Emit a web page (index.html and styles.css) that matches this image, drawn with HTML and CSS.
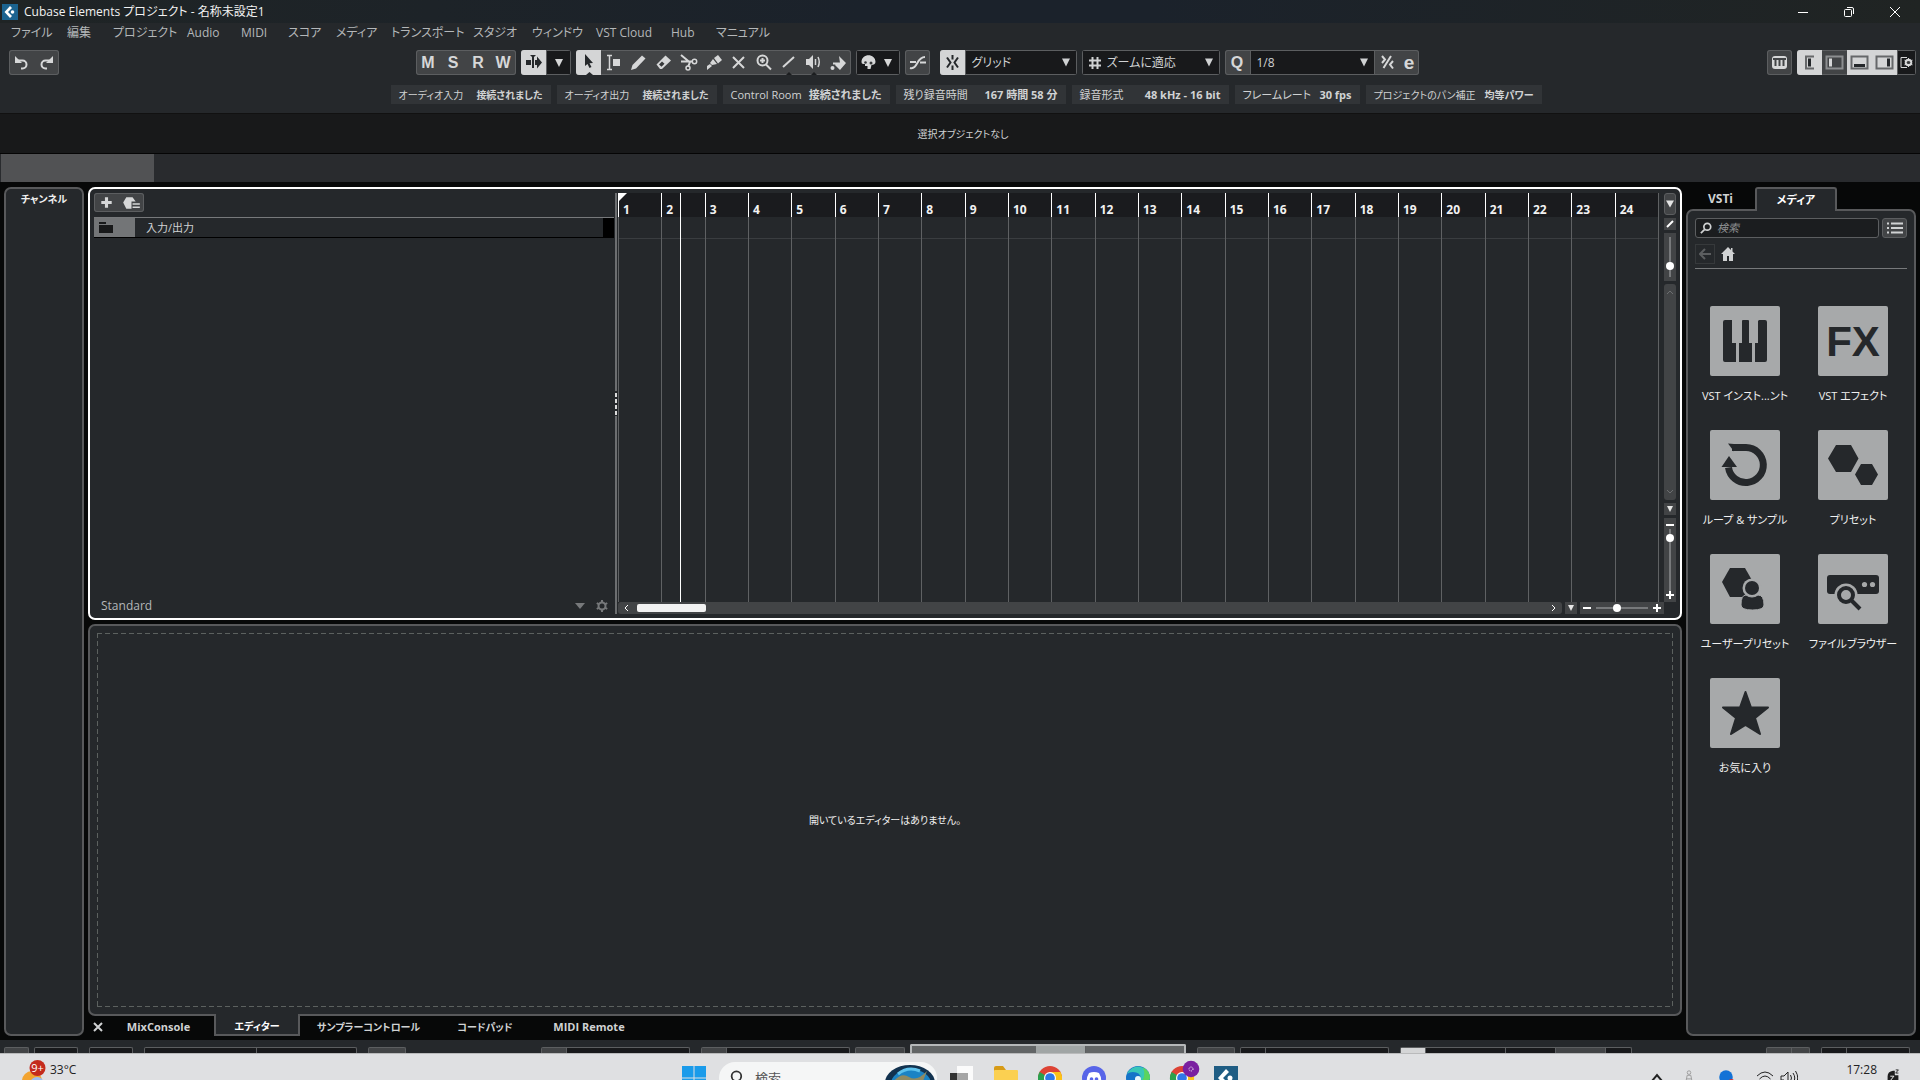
FILE: index.html
```html
<!DOCTYPE html>
<html lang="ja">
<head>
	<meta charset="UTF-8">
	<title>Cubase Elements プロジェクト - 名称未設定1</title>
	<link rel="stylesheet" href="styles.css">
</head>
<body>
	<header class="titlebar">
		<svg class="app-logo" viewBox="0 0 16 16"><rect width="16" height="16" fill="#1b6390"/><path d="M8 2 2.5 8 8 14l2-2-4-4 4-4z" fill="#fff"/><circle cx="10.500" cy="8" r="1.800" fill="#fff"/></svg>
		<h1>Cubase Elements プロジェクト - 名称未設定1</h1>
		<div class="win-buttons">
			<button aria-label="最小化"><svg viewBox="0 0 12 12"><path d="M1 6.500h10"/></svg></button>
			<button aria-label="元に戻す"><svg viewBox="0 0 12 12"><rect x="1.500" y="3.500" width="7" height="7" rx="1"/><path d="M4 1.500h5a1.500 1.500 0 0 1 1.500 1.500v5"/></svg></button>
			<button aria-label="閉じる"><svg viewBox="0 0 12 12"><path d="M1 1l10 10M11 1 1 11"/></svg></button>
		</div>
	</header>

	<nav class="menu">
		<a href="#">ファイル</a>
		<a href="#">編集</a>
		<a href="#">プロジェクト</a>
		<a href="#">Audio</a>
		<a href="#">MIDI</a>
		<a href="#">スコア</a>
		<a href="#">メディア</a>
		<a href="#">トランスポート</a>
		<a href="#">スタジオ</a>
		<a href="#">ウィンドウ</a>
		<a href="#">VST Cloud</a>
		<a href="#">Hub</a>
		<a href="#">マニュアル</a>
	</nav>

	<div class="toolbar">
		<div class="group">
			<button class="tool" aria-label="元に戻す"><svg viewBox="0 0 25 25"><path d="M8.500 10.500h5a4 4 0 0 1 0 8H12" class="line"/><path d="M6 6v7h7z"/></svg></button>
			<button class="tool" aria-label="やり直し"><svg viewBox="0 0 25 25"><path d="M16.500 10.500h-5a4 4 0 0 0 0 8H13" class="line"/><path d="M19 6v7h-7z"/></svg></button>
		</div>

		<div class="toolbar-main">
			<div class="group letters">
				<button class="tool">M</button>
				<button class="tool">S</button>
				<button class="tool">R</button>
				<button class="tool">W</button>
			</div>
			<div class="group">
				<button class="tool on" aria-label="オートスクロール"><svg viewBox="0 0 25 25"><path d="M5 10h5v5H5zM14 10h2V6.500l5 6-5 6V15h-2z"/><path d="M9 5h6l-2 2v11h-2V7z"/></svg></button>
				<button class="tool dark" aria-label="オートスクロール設定"><svg viewBox="0 0 25 25"><path d="M9 9h8l-4 8z"/></svg></button>
			</div>
			<div class="group">
				<button class="tool on" aria-label="選択"><svg viewBox="0 0 25 25"><path d="M9 4v12l2.500-2 2 4 2-1-2-3.700L17 13z"/><path d="M10 25l3.500-3 3.500 3z"/></svg></button>
				<button class="tool" aria-label="範囲選択"><svg viewBox="0 0 25 25"><path d="M6 5.500h5M8.500 6v13M6 19.500h5" class="line mid"/><path d="M12 9h7v7h-7z"/></svg></button>
				<button class="tool" aria-label="鉛筆"><svg viewBox="0 0 25 25"><path d="M5 20l1.500-5L16 5.500l3.500 3L10 18.500z"/></svg></button>
				<button class="tool" aria-label="消しゴム"><svg viewBox="0 0 25 25"><path d="M5.500 14.500 14.500 5.500l5.500 5-9 8.500H9z"/><path d="M8 14.500l2.500 2.200 3-3L11 11.500z" class="hole"/></svg></button>
				<button class="tool" aria-label="はさみ"><svg viewBox="0 0 25 25"><path d="M5 5l9 7.500M5 11.500l11 0M14 12l-2 5" class="line"/><circle cx="18.500" cy="11.500" r="2.200" class="line mid"/><circle cx="12" cy="18" r="2" class="line mid"/></svg></button>
				<button class="tool" aria-label="のり"><svg viewBox="0 0 25 25"><path d="M13 8l4-3 4 5-4 3.500z"/><path d="M12 9l4 5-5 1-2-2zM9 14l2 2-5 4v-4z"/></svg></button>
				<button class="tool" aria-label="ミュート"><svg viewBox="0 0 25 25"><path d="M7 7l11 11M18 7 7 18" class="line"/></svg></button>
				<button class="tool" aria-label="ズーム"><svg viewBox="0 0 25 25"><circle cx="11.500" cy="10.500" r="5" class="line"/><path d="M15 14.500l5 5M9 10.500h5M11.500 8v5" class="line"/></svg></button>
				<button class="tool" aria-label="ライン"><svg viewBox="0 0 25 25"><path d="M7 17 18 7" class="line"/><path d="M10 25l3-3 3 3z" class="notch"/></svg></button>
				<button class="tool" aria-label="再生"><svg viewBox="0 0 25 25"><path d="M5 9h3l4-4v14l-4-4H5z"/><path d="M14.500 9v6M17 7q2.500 5 0 10" class="line mid"/><path d="M10 25l3-3 3 3z" class="notch"/></svg></button>
				<button class="tool" aria-label="カラー"><svg viewBox="0 0 25 25"><path d="M13 6l7 7-6 7-5-5 1-2h4z"/><path d="M7 13.500h8" class="line"/><circle cx="6.500" cy="18" r="2"/></svg></button>
			</div>
			<div class="group color-menu">
				<button class="tool dark" aria-label="カラーメニュー"><svg viewBox="0 0 44 25"><path d="M5.500 12c0-9 14-9 14 0 0 2-2 3-4 3l-1 4h-3v-3H9v-2c-2 0-3.500 0-3.500-2z"/><circle cx="9.500" cy="12.500" r="1.300" class="hole"/><circle cx="15" cy="13" r="1.500" class="hole"/><path d="M28 9h8l-4 8z"/></svg></button>
			</div>
			<div class="group">
				<button class="tool" aria-label="ゼロクロス"><svg viewBox="0 0 25 25"><path d="M5 18c8 2 6-11 15-11M5 12h6M15 12.500h6" class="line"/></svg></button>
			</div>
			<div class="group snap">
				<button class="tool on" aria-label="スナップ"><svg viewBox="0 0 25 25"><path d="M12.500 5v4.500M12.500 15.500V20M7 7.500l3.500 5-3.500 5M18 7.500l-3.500 5 3.500 5" class="line"/></svg></button>
				<label class="picker"><select aria-label="スナップタイプ"><option>グリッド</option></select><svg viewBox="0 0 8 8"><path d="M0 0h8L4 8z"/></svg></label>
			</div>
			<div class="group grid-type">
				<label class="picker"><svg class="hash" viewBox="0 0 12 12"><path d="M3.500 0v12M8.500 0v12M0 3.500h12M0 8.500h12"/></svg><select aria-label="グリッドタイプ"><option>ズームに適応</option></select><svg viewBox="0 0 8 8"><path d="M0 0h8L4 8z"/></svg></label>
			</div>
			<div class="group quantize">
				<button class="tool letter-q">Q</button>
				<label class="picker"><select aria-label="クオンタイズ"><option>1/8</option></select><svg viewBox="0 0 8 8"><path d="M0 0h8L4 8z"/></svg></label>
				<button class="tool" aria-label="ソフトクオンタイズ"><svg viewBox="0 0 25 25"><path d="M7 6l3 3.500L7 13M8.500 18 16 6M18 11l-3 3.500 3 4" class="line"/></svg></button>
				<button class="tool letter-e">e</button>
			</div>
		</div>

		<div class="toolbar-right">
			<div class="group">
				<button class="tool" aria-label="オンスクリーンキーボード"><svg viewBox="0 0 25 25"><rect x="5" y="6" width="15" height="13" rx="3"/><path d="M8.500 10v6M12.500 10v6M16.500 10v6M6 9h13" class="cut"/></svg></button>
			</div>
			<div class="group zones">
				<button class="tool on" aria-label="インスペクター"><svg viewBox="0 0 25 25"><path d="M17 6.500H9v12h8" class="frame"/><path d="M11 8.500h3v8h-3z"/></svg></button>
				<button class="tool" aria-label="左ゾーン"><svg viewBox="0 0 25 25"><rect x="4.500" y="6.500" width="16" height="12" class="frame"/><path d="M7 8.500h3v8H7z"/></svg></button>
				<button class="tool on" aria-label="下ゾーン"><svg viewBox="0 0 25 25"><rect x="4.500" y="6.500" width="16" height="12" class="frame"/><path d="M7 14h11v3H7z"/></svg></button>
				<button class="tool on" aria-label="右ゾーン"><svg viewBox="0 0 25 25"><rect x="4.500" y="6.500" width="16" height="12" class="frame"/><path d="M15 8.500h3v8h-3z"/></svg></button>
				<button class="tool dark" aria-label="レイアウト設定"><svg viewBox="0 0 19 25"><path d="M10 7.500H4v10h6" class="line thin"/><circle cx="11.500" cy="12.500" r="2.800" class="line"/><path d="M11.500 8v9M7.500 10.200l8 4.600M15.500 10.200l-8 4.600" class="line thin"/><circle cx="11.500" cy="12.500" r="1.500" class="hole"/></svg></button>
			</div>
		</div>
	</div>

	<dl class="status">
		<div class="w160 tight"><dt>オーディオ入力</dt><dd>接続されました</dd></div>
		<div class="w160 tight"><dt>オーディオ出力</dt><dd>接続されました</dd></div>
		<div class="w167"><dt>Control Room</dt><dd>接続されました</dd></div>
		<div class="w170"><dt>残り録音時間</dt><dd>167 時間 58 分</dd></div>
		<div class="w157"><dt>録音形式</dt><dd>48 kHz - 16 bit</dd></div>
		<div class="w125"><dt>フレームレート</dt><dd>30 fps</dd></div>
		<div class="w176 tight"><dt>プロジェクトのパン補正</dt><dd>均等パワー</dd></div>
	</dl>

	<div class="info-line">選択オブジェクトなし</div>
	<div class="overview"><div class="overview-range"></div></div>

	<main class="workspace">
		<aside class="channel">チャンネル</aside>

		<div class="center">
			<section class="project">
				<div class="tracks">
					<div class="group add-track">
						<button class="tool" aria-label="トラックを追加"><svg viewBox="0 0 24 18"><path d="M12 4v10M7 9h10" class="line plus"/></svg></button>
						<button class="tool" aria-label="トラックプリセット"><svg viewBox="0 0 24 18"><path d="M7 4h6l3 4h-4v7H7L4 9z"/><path d="M13 10.500h7M13 13.500h7" class="line mid"/></svg></button>
					</div>
					<div class="track">
						<div class="track-icon"><svg viewBox="0 0 14 12"><path d="M0 1h7v2h7v9H0z"/><path d="M0 3.500h14" stroke="#77797b"/></svg></div>
						<span>入力/出力</span>
						<div class="track-meter"></div>
					</div>
					<div class="track-foot">
						<span>Standard</span>
						<button aria-label="ビュー"><svg viewBox="0 0 10 6"><path d="M0 0h10L5 6z"/></svg></button>
						<button aria-label="設定"><svg viewBox="0 0 14 14"><circle cx="7" cy="7" r="3.500" class="ring"/><path d="M7 1v2.500M7 10.500V13M1.800 4l2.200 1.300M10 8.700l2.200 1.300M1.800 10 4 8.700M10 5.300 12.200 4" class="ring"/></svg></button>
					</div>
				</div>
				<div class="splitter"><i></i><i></i><i></i><i></i></div>
				<div class="timeline">
					<div class="bars">
						<ol>
							<li><span>1</span></li>
							<li><span>2</span></li>
							<li><span>3</span></li>
							<li><span>4</span></li>
							<li><span>5</span></li>
							<li><span>6</span></li>
							<li><span>7</span></li>
							<li><span>8</span></li>
							<li><span>9</span></li>
							<li><span>10</span></li>
							<li><span>11</span></li>
							<li><span>12</span></li>
							<li><span>13</span></li>
							<li><span>14</span></li>
							<li><span>15</span></li>
							<li><span>16</span></li>
							<li><span>17</span></li>
							<li><span>18</span></li>
							<li><span>19</span></li>
							<li><span>20</span></li>
							<li><span>21</span></li>
							<li><span>22</span></li>
							<li><span>23</span></li>
							<li><span>24</span></li>
						</ol>
						<div class="locator"></div>
						<div class="playhead"></div>
					</div>
					<div class="side-bar">
						<button class="ruler-menu" aria-label="ルーラー"><svg viewBox="0 0 8 7"><path d="M0 0h8L4 7z"/></svg></button>
						<button class="small" aria-label="編集"><svg viewBox="0 0 8 8"><path d="M1 7l6-6" stroke-width="2"/></svg></button>
						<div class="vslider wave"><input type="range" value="22" aria-label="波形ズーム"></div>
						<div class="vscroll">
							<svg viewBox="0 0 8 4"><path d="M1 4l3-3 3 3"/></svg>
							<svg viewBox="0 0 8 4"><path d="M1 0l3 3 3-3"/></svg>
						</div>
						<button class="small" aria-label="縦ズーム設定"><svg viewBox="0 0 8 8"><path d="M1 1h6L4 7z" class="solid"/></svg></button>
						<div class="vslider zoom">
							<button aria-label="縮小"><svg viewBox="0 0 8 8"><path d="M0 4h8" stroke-width="2"/></svg></button>
							<input type="range" value="92" aria-label="縦ズーム">
							<button aria-label="拡大"><svg viewBox="0 0 8 8"><path d="M0 4h8M4 0v8" stroke-width="2"/></svg></button>
						</div>
					</div>
					<div class="foot-bar">
						<div class="hscroll">
							<svg viewBox="0 0 4 8"><path d="M4 1 1 4l3 3"/></svg>
							<div class="thumb"></div>
							<svg viewBox="0 0 4 8"><path d="M0 1l3 3-3 3"/></svg>
						</div>
						<button class="small" aria-label="横ズーム設定"><svg viewBox="0 0 8 8"><path d="M1 1h6L4 7z" class="solid"/></svg></button>
						<div class="hzoom">
							<button aria-label="縮小"><svg viewBox="0 0 8 8"><path d="M0 4h8" stroke-width="2"/></svg></button>
							<input type="range" value="38" aria-label="横ズーム">
							<button aria-label="拡大"><svg viewBox="0 0 8 8"><path d="M0 4h8M4 0v8" stroke-width="2"/></svg></button>
						</div>
					</div>
				</div>
			</section>

			<section class="lower">
				<p>開いているエディターはありません。</p>
			</section>
			<nav class="lower-tabs">
				<button class="close" aria-label="閉じる"><svg viewBox="0 0 10 10"><path d="M1 1l8 8M9 1 1 9"/></svg></button>
				<button class="t1">MixConsole</button>
				<button class="t2 active">エディター</button>
				<button class="t3">サンプラーコントロール</button>
				<button class="t4">コードパッド</button>
				<button class="t5">MIDI Remote</button>
			</nav>
		</div>

		<aside class="right">
			<nav class="right-tabs">
				<button>VSTi</button>
				<button class="active">メディア</button>
			</nav>
			<div class="media">
				<div class="media-search">
					<label class="search-box"><svg viewBox="0 0 14 14"><circle cx="8.500" cy="5.500" r="4"/><path d="M5.500 8.500 1 13"/></svg><input type="text" placeholder="検索" aria-label="検索"></label>
					<button class="list-btn" aria-label="リスト"><svg viewBox="0 0 16 12"><path d="M0 1.500h2M4 1.500h12M0 6h2M4 6h12M0 10.500h2M4 10.500h12"/></svg></button>
				</div>
				<div class="media-path">
					<button class="back" aria-label="戻る"><svg viewBox="0 0 12 12"><path d="M12 6H2M6 1 1 6l5 5"/></svg></button>
					<button class="home" aria-label="ホーム"><svg viewBox="0 0 14 14"><path d="M7 0 0 7h2v7h4V9h2v5h4V7h2l-2.500-2.500V1H10v2z"/></svg></button>
				</div>
				<ul class="tiles">
					<li><a href="#"><svg viewBox="0 0 70 70"><path d="M15 14h7v23h4v19H15q-2 0-2-2V16q0-2 2-2zM33 14h5q1 0 1 1v22h3v19H29V37h3V15q0-1 1-1zM49 14h6q2 0 2 2v38q0 2-2 2H45V37h3V15z"/></svg>VST インスト...ント</a></li>
					<li><a href="#"><svg viewBox="0 0 70 70"><text x="35" y="50" text-anchor="middle" class="fx">FX</text></svg>VST エフェクト</a></li>
					<li><a href="#"><svg viewBox="0 0 70 70"><path d="M22 17.500h14a17.500 17.500 0 1 1-17.500 20" class="loop"/><path d="M11.500 37 19 26l8 11z"/><path d="M18 13.500l6 8V14z"/></svg>ループ &amp; サンプル</a></li>
					<li><a href="#"><svg viewBox="0 0 70 70"><path d="M18 15h15l7.500 13.500L33 42H18l-8-13.500zM43 34h11l6 10.500L54 55H43l-6-10.500z"/></svg>プリセット</a></li>
					<li><a href="#"><svg viewBox="0 0 70 70"><path d="M20 14h15l8 14-8 15H20l-8-15z"/><circle cx="42" cy="34" r="9.500" class="bg"/><circle cx="42" cy="34" r="7"/><path d="M31 51q0-10 5-10 6 4 12 0 6 0 6 10 0 5-11.500 5T31 51z" class="person"/></svg>ユーザープリセット</a></li>
					<li><a href="#"><svg viewBox="0 0 70 70"><rect x="9" y="21" width="52" height="19" rx="3"/><circle cx="46.500" cy="30.500" r="2.600" class="bg"/><circle cx="54.500" cy="30.500" r="2.600" class="bg"/><circle cx="28" cy="41" r="11.500" class="bg"/><circle cx="28" cy="41" r="7" class="lens"/><path d="M33 46l9 9" class="lens"/></svg>ファイルブラウザー</a></li>
					<li><a href="#"><svg viewBox="0 0 70 70"><path d="M35.500 14l5.500 15.500h17L45 40l5 16-14.500-9L21 56l5-16-13-10.500h17z" class="star"/></svg>お気に入り</a></li>
				</ul>
			</div>
		</aside>
	</main>

	<!-- トランスポートバー (タスクバーの下に隠れる) -->
	<div class="transport">
		<div class="tp">
			<div class="pair"><i class="grey w25"></i><i class="w44"></i></div>
			<i class="w44"></i>
			<i class="w213"><b class="w112"></b></i>
			<i class="grey w38"></i>
		</div>
		<div class="tp">
			<i class="w149"><b class="fill w25"></b></i>
			<div class="pair"><i class="w149"><b class="fill w25"></b></i><i class="grey w50"></i><i class="display"><b></b></i></div>
			<div class="pair"><i class="grey w38"></i><i class="w149"><b class="w25"></b></i></div>
			<i class="w232"><b class="light w25"></b><b class="w80"></b><b class="w50"></b><b class="fill w50"></b></i>
		</div>
		<div class="tp">
			<i class="grey w44"><b class="w25"></b></i>
			<i class="w89"><b class="w25"></b></i>
		</div>
	</div>

	<footer class="taskbar">
		<div class="taskbar-row">
			<button class="weather">
				<svg viewBox="0 0 28 34"><circle cx="12" cy="23" r="10" fill="#f2a431"/><circle cx="17" cy="26" r="7" fill="#9dbdf0"/><circle cx="17.500" cy="10" r="8" fill="#c42b1c"/><text x="17.500" y="14" text-anchor="middle">9+</text></svg>
				<span>33°C</span>
			</button>
			<div class="apps">
				<button aria-label="スタート"><svg viewBox="0 0 24 24"><path d="M0 0h11.500v11.500H0zM12.500 0H24v11.500H12.500zM0 12.500h11.500V24H0zM12.500 12.500H24V24H12.500z" fill="#1a9bea"/></svg></button>
				<label class="task-search"><svg viewBox="0 0 16 18"><circle cx="8.500" cy="7" r="5.500"/><path d="M5 12l-4 5"/></svg><input type="text" placeholder="検索" aria-label="Windows 検索"><svg class="art" viewBox="0 0 50 32"><ellipse cx="25" cy="21" rx="25" ry="18" fill="#12324f"/><ellipse cx="26" cy="22" rx="20" ry="15" fill="#1b83c4"/><path d="M8 20q8-10 16-5t18-6l-4 10-30 8z" fill="#8f8a62"/><path d="M13 12q10-8 22-3" stroke="#5cc1ec" stroke-width="3" fill="none"/></svg></label>
				<button aria-label="タスクビュー"><svg viewBox="0 0 24 24"><path d="M7 0h16v17H7z" fill="#fbfbfb"/><path d="M0 7h7v17H0z" fill="#333"/><path d="M7 7h11v17H7z" fill="#a5a5a5"/></svg></button>
				<button aria-label="エクスプローラー"><svg viewBox="0 0 24 24"><path d="M0 2q0-2 2-2h7l3 4v4H0z" fill="#d79b16"/><rect y="4" width="24" height="20" rx="1" fill="#fbd051"/></svg></button>
				<button aria-label="Chrome"><svg viewBox="0 0 24 24"><circle cx="12" cy="12" r="12" fill="#dd4335"/><path d="M12 12 1.600 6A12 12 0 0 0 12 24z" fill="#2aa14e"/><path d="M12 6h10.400A12 12 0 0 1 12 24l5-9z" fill="#fbc118"/><circle cx="12" cy="12" r="6" fill="#fff"/><circle cx="12" cy="12" r="4.800" fill="#2f78e8"/></svg></button>
				<button aria-label="Discord"><svg viewBox="0 0 24 24"><circle cx="12" cy="12" r="12" fill="#5865e8"/><path d="M7 7q5-2 10 0 3 5 2 10l-4 2-1-2h-4l-1 2-4-2q-1-5 2-10z" fill="#fff"/><circle cx="9.500" cy="13" r="1.800" fill="#5865e8"/><circle cx="14.500" cy="13" r="1.800" fill="#5865e8"/></svg></button>
				<button aria-label="Edge"><svg viewBox="0 0 24 24"><circle cx="12" cy="12" r="12" fill="#1573c8"/><path d="M1 8A12 12 0 0 1 24 11q0 5-6 5-5 0-3-4-1-6-8-6-4 0-6 2z" fill="#38c6b8"/><path d="M17 1.500A12 12 0 0 1 24 12q-1 4-5 4l-3-1q4-6 1-13.500z" fill="#5bd45d"/><circle cx="12" cy="13" r="3" fill="#e9f5fa"/></svg></button>
				<button aria-label="Chrome プロフィール"><svg viewBox="0 0 24 24" class="badged"><circle cx="12" cy="12" r="12" fill="#dd4335"/><path d="M12 12 1.600 6A12 12 0 0 0 12 24z" fill="#2aa14e"/><path d="M12 6h10.400A12 12 0 0 1 12 24l5-9z" fill="#fbc118"/><circle cx="12" cy="12" r="6" fill="#fff"/><circle cx="12" cy="12" r="4.800" fill="#2f78e8"/><circle cx="21" cy="3" r="8.300" fill="#7a1fa0"/><circle cx="21" cy="3" r="2" fill="none" stroke="#fff" stroke-dasharray="1 1"/></svg></button>
				<button aria-label="Cubase"><svg viewBox="0 0 24 24"><rect width="24" height="24" fill="#1f5d84"/><path d="M12 3 4 12l8 9 3-3-6-6 6-6z" fill="#fff"/><circle cx="16" cy="12" r="2.500" fill="#fff"/></svg></button>
			</div>
			<div class="tray">
				<button class="tray-up" aria-label="隠れているインジケーター"><svg viewBox="0 0 12 12"><path d="M1 9l5-6 5 6"/></svg></button>
				<svg class="pin" viewBox="0 0 10 20"><circle cx="5" cy="4" r="2"/><path d="M3 7h4l2 10H1zM2 11h6"/></svg>
				<svg class="net" viewBox="0 0 16 20"><circle cx="8" cy="9" r="7.500" fill="#1372d6"/><circle cx="14" cy="14" r="3" fill="#d92f2f"/></svg>
				<svg class="wifi" viewBox="0 0 18 18"><path d="M1 7q8-8 16 0M3.500 10q5.500-6 11 0M6 13q3-3 6 0"/></svg>
				<svg class="sound" viewBox="0 0 18 18"><path d="M1 7h3l4-4v12l-4-4H1zM10.500 6q2 3 0 6M13 4q3.500 5 0 10M15.500 2q4.500 7 0 14"/></svg>
				<time>17:28</time>
				<svg class="bell" viewBox="0 0 14 20"><path d="M1 8q0-5 6-6h2v5h4v9H1z" fill="#1e1e1e"/><path d="M4 8h4l-4 5h4" class="z"/><path d="M10 1h3l-3 3.500h3" class="zz"/></svg>
			</div>
		</div>
	</footer>
</body>
</html>
```

FILE: styles.css
```css
* {
    box-sizing: border-box;
}

body {
    margin: 0;
    height: 100vh;
    display: flex;
    flex-direction: column;
    overflow: hidden;
    background: #25282b;
    color: #d0d2d3;
    font: 12px/16px "Open Sans", "Noto Sans CJK JP", sans-serif;
    font-feature-settings: "palt";
}

ul,
ol,
dl,
dd,
p,
h1 {
    margin: 0;
    padding: 0;
}

li {
    list-style: none;
}

a {
    color: inherit;
    text-decoration: none;
}

button,
input,
select {
    margin: 0;
    padding: 0;
    border: 0;
    background: none;
    color: inherit;
    font: inherit;
    font-feature-settings: inherit;
    outline: none;
}

svg {
    display: block;
    fill: currentColor;
}

/* title + menu */
.titlebar {
    display: flex;
    align-items: center;
    height: 23px;
    padding: 0 2px;
    background: linear-gradient(90deg, #1f2425, #1b222b 45%, #1b222b 60%, #202423);
}

.app-logo {
    width: 16px;
    height: 16px;
    margin-right: 6px;
}

.titlebar h1 {
    color: #f2f2f2;
    font-size: 12px;
    font-weight: normal;
}

.win-buttons {
    display: flex;
    margin-left: auto;
}

.win-buttons button {
    display: flex;
    justify-content: center;
    width: 46px;
}

.win-buttons svg {
    width: 12px;
    height: 12px;
    fill: none;
    stroke: #fff;
}

.menu {
    display: grid;
    grid-template-columns: 56px 46px 74px 54px 47px 48px 55px 82px 59px 64px 75px 45px auto;
    justify-content: start;
    align-items: center;
    height: 20px;
    padding-left: 11px;
    color: #b4b7b9;
    white-space: nowrap;
}

/* toolbar */
.toolbar {
    display: flex;
    justify-content: space-between;
    padding: 7px 4px 0 9px;
}

.toolbar-main,
.toolbar-right {
    display: flex;
    gap: 5px;
}

.toolbar-main {
    margin-left: 8px;
}

.group {
    display: flex;
    height: 25px;
    overflow: hidden;
    background: #424446;
    border-radius: 3px;
    box-shadow: inset 0 0 0 1px #5c5e60;
}

.tool {
    width: 25px;
    height: 25px;
    flex: none;
    color: #d6d7d8;
}

.tool svg {
    width: 100%;
    height: 100%;
}

.tool.on {
    background: #d4d5d6;
    color: #25282b;
}

.dark,
.picker {
    background: #18191b;
    box-shadow: inset 0 0 0 1px #5c5e60;
}

.tool .line {
    fill: none;
    stroke: currentColor;
    stroke-width: 2;
}

.tool .line.thin {
    stroke-width: 1;
}

.tool .line.mid {
    stroke-width: 1.5;
}

.tool .plus {
    stroke-width: 3;
}

.tool .hole {
    fill: #36383a;
}

.tool .notch {
    fill: #1b1d1f;
}

.tool .cut {
    fill: none;
    stroke: #424446;
    stroke-width: 2;
}

.tool .frame {
    fill: none;
    stroke: #8c8e90;
    stroke-width: 2;
}

.on .frame {
    stroke: #66686a;
}

.letters .tool,
.letter-q,
.letter-e {
    font: bold 16px/24px "Liberation Sans", sans-serif;
}

.letter-e {
    font-size: 19px;
}

.letter-e,
.zones .dark {
    width: 19px;
}

.color-menu .tool {
    width: 44px;
}

.snap {
    width: 137px;
    margin-left: 5px;
}

.grid-type {
    width: 138px;
}

.quantize {
    width: 194px;
}

.picker {
    display: flex;
    align-items: center;
    flex: 1;
    padding: 0 7px;
}

.picker select {
    flex: 1;
    min-width: 0;
    appearance: none;
}

.picker svg {
    width: 8px;
    height: 9px;
}

.picker .hash {
    width: 12px;
    height: 12px;
    margin-right: 6px;
    stroke: currentColor;
    stroke-width: 2;
}

/* status */
.status {
    display: flex;
    justify-content: center;
    gap: 6px;
    padding: 10px 0 9px 12px;
}

.status div {
    display: flex;
    justify-content: space-between;
    align-items: center;
    height: 19px;
    padding: 0 8px;
    background: #313437;
    font-size: 11px;
    white-space: nowrap;
}

.status .tight {
    font-size: 10px;
}

.status dd {
    font-weight: bold;
}

.w160 {
    width: 160px;
}

.w167 {
    width: 167px;
}

.w170 {
    width: 170px;
}

.w157 {
    width: 157px;
}

.w125 {
    width: 125px;
}

.w176 {
    width: 176px;
}

.info-line {
    display: flex;
    align-items: center;
    justify-content: center;
    height: 41px;
    padding-left: 6px;
    background: #18191a;
    border-top: 1px solid #111;
    border-bottom: 1px solid #050505;
    font-size: 10px;
}

.overview {
    height: 28px;
    padding: 0 1px;
    background: #292b2e;
}

.overview-range {
    width: 8%;
    height: 28px;
    background: #515254;
}

/* workspace */
.workspace {
    display: flex;
    flex: 1;
    gap: 4px;
    min-height: 0;
    padding: 5px 4px 4px;
    background: #070808;
}

.channel,
.lower,
.media {
    background: #25282b;
    border: 2px solid #58595b;
    border-radius: 7px;
}

.channel {
    width: 80px;
    padding-top: 2px;
    color: #f0f0f0;
    font-size: 10px;
    font-weight: bold;
    text-align: center;
}

.center {
    display: flex;
    flex: 1;
    flex-direction: column;
    min-width: 0;
}

.project {
    display: flex;
    flex: 52%;
    min-height: 0;
    margin-bottom: 4px;
    padding: 4px;
    background: #25282b;
    border: 2px solid #fff;
    border-radius: 7px;
}

.tracks {
    display: flex;
    flex-direction: column;
    width: 520px;
}

.add-track {
    align-self: flex-start;
    height: 19px;
    margin-bottom: 5px;
}

.add-track .tool {
    height: 19px;
}

.track {
    display: flex;
    align-items: center;
    height: 21px;
    border-top: 1px solid #77797b;
    border-bottom: 1px solid #000;
}

.track-icon {
    width: 41px;
    height: 19px;
    margin-right: 11px;
    padding: 3px 5px;
    background: #737577;
    color: #18191a;
}

.track span {
    font-size: 11px;
}

.track-icon svg {
    width: 14px;
    height: 12px;
}

.track-meter {
    width: 11px;
    height: 19px;
    margin-left: auto;
    background: #000;
}

.track-foot {
    display: flex;
    align-items: center;
    gap: 10px;
    margin-top: auto;
    padding: 0 5px 0 7px;
}

.track-foot span {
    flex: 1;
    color: #b4b7b9;
}

.track-foot button {
    color: #77797b;
}

.track-foot svg {
    width: 10px;
}

.track-foot button:last-child svg {
    width: 14px;
}

.ring {
    fill: none;
    stroke: currentColor;
    stroke-width: 2;
}

.splitter {
    display: flex;
    flex-direction: column;
    justify-content: center;
    gap: 2px;
    width: 2px;
    margin: 0 1px;
    background: linear-gradient(#6c6e70 47%, #25282b 47%, #25282b 53%, #6c6e70 53%);
}

.splitter i {
    height: 4px;
    background: #dcdcdc;
}

.timeline {
    display: grid;
    flex: 1;
    grid-template-columns: 1fr 12px;
    grid-template-rows: 1fr 12px;
    min-width: 0;
}

.bars {
    position: relative;
    margin-right: 5px;
    border-right: 1px solid #5f6163;
}

.bars ol {
    display: grid;
    grid-template-columns: repeat(24, 1fr);
    height: 100%;
}

.bars li {
    border-left: 1px solid #5f6163;
}

.bars span {
    display: block;
    height: 24px;
    margin-left: -1px;
    padding: 9px 0 0 4px;
    border-left: 1px solid #fff;
    background: #1a1b1e;
    color: #f2f2f2;
    font-weight: bold;
}

.bars li:after {
    content: '';
    display: block;
    height: 21px;
    border-bottom: 1px solid #3a3d40;
}

.locator {
    position: absolute;
    left: 0;
    top: 0;
    border-top: 9px solid #fff;
    border-right: 9px solid transparent;
}

.playhead {
    position: absolute;
    left: 6%;
    top: 0;
    bottom: 0;
    width: 1px;
    background: #fff;
}

.side-bar {
    display: flex;
    grid-row: span 2;
    flex-direction: column;
    gap: 3px;
    padding-bottom: 12px;
}

.side-bar svg,
.foot-bar svg {
    width: 8px;
    height: 8px;
    margin: auto;
    fill: none;
    stroke: #fff;
}

.side-bar .ruler-menu {
    height: 22px;
    background: #424446;
    border: 1px solid #5c5e60;
    border-radius: 3px;
}

.side-bar .ruler-menu svg,
.small .solid {
    fill: #e4e4e4;
    stroke: none;
}

.small {
    flex: none;
    width: 12px;
    height: 12px;
    background: #424446;
}

.vslider {
    display: flex;
    flex-direction: column;
    align-items: center;
    background: #424446;
}

.wave {
    height: 48px;
    padding: 4px 0;
}

.zoom {
    height: 84px;
    padding: 3px 0;
}

.vslider input {
    flex: 1;
    width: 12px;
    min-height: 0;
    writing-mode: vertical-lr;
    direction: rtl;
    background: linear-gradient(90deg, transparent 5px, #77797b 5px, #77797b 7px, transparent 7px);
}

input[type=range] {
    appearance: none;
}

input[type=range]::-webkit-slider-thumb {
    width: 8px;
    height: 8px;
    appearance: none;
    border-radius: 50%;
    background: #fff;
}

.vscroll {
    display: flex;
    flex: 1;
    flex-direction: column;
    justify-content: space-between;
    padding: 4px 0;
    background: #424446;
    border-radius: 3px;
}

.side-bar .vscroll svg {
    margin: 0 auto;
    stroke: #6c6e70;
}

.foot-bar {
    display: flex;
    gap: 3px;
}

.hscroll {
    display: flex;
    flex: 1;
    align-items: center;
    padding: 2px 6px;
    background: #424446;
    border-radius: 3px;
}

.hscroll svg {
    flex: none;
    width: 4px;
    margin: 0;
}

.thumb {
    width: 69px;
    height: 8px;
    margin: 0 auto 0 9px;
    background: #f2f2f2;
    border-radius: 2px;
}

.hzoom {
    display: flex;
    align-items: center;
    gap: 5px;
    width: 84px;
    padding: 0 3px;
    background: #424446;
}

.hzoom input {
    flex: 1;
    min-width: 0;
    height: 12px;
    background: linear-gradient(transparent 5px, #77797b 5px, #77797b 7px, transparent 7px);
}

.lower {
    display: flex;
    flex: 47%;
    min-height: 0;
    padding: 7px;
}

.lower p {
    display: flex;
    flex: 1;
    align-items: center;
    justify-content: center;
    background:
        repeating-linear-gradient(90deg, #5c615f 0 5px, transparent 5px 8px) top / 100% 1px no-repeat,
        repeating-linear-gradient(90deg, #5c615f 0 5px, transparent 5px 8px) bottom / 100% 1px no-repeat,
        repeating-linear-gradient(#5c615f 0 5px, transparent 5px 8px) left / 1px 100% no-repeat,
        repeating-linear-gradient(#5c615f 0 5px, transparent 5px 8px) right / 1px 100% no-repeat;
    color: #f2f2f2;
    font-size: 10px;
}

.lower-tabs {
    display: flex;
    height: 20px;
    padding-left: 5px;
}

.lower-tabs button {
    flex: none;
    padding-top: 2px;
    font-size: 11px;
    font-weight: bold;
    white-space: nowrap;
}

.lower-tabs .close svg {
    width: 10px;
    height: 10px;
    fill: none;
    stroke: currentColor;
    stroke-width: 2;
}

.t1 {
    width: 111px;
}

.lower-tabs .active {
    position: relative;
    width: 86px;
    margin-top: -2px;
    padding-top: 4px;
    background: #25282b;
    border: 2px solid #58595b;
    border-top: 0;
    color: #fff;
}

.lower-tabs .t2,
.lower-tabs .t3,
.lower-tabs .t4 {
    font-size: 10px;
}

.t3 {
    width: 137px;
}

.t4 {
    width: 96px;
}

.t5 {
    width: 112px;
}

/* media rack */
.right {
    display: flex;
    flex-direction: column;
    width: 230px;
}

.right-tabs {
    display: flex;
    height: 24px;
}

.right-tabs button {
    width: 69px;
    font-size: 12px;
    font-weight: bold;
}

.right-tabs .active {
    position: relative;
    width: 82px;
    background: #25282b;
    border: 2px solid #58595b;
    border-bottom: 0;
    border-radius: 3px 3px 0 0;
    color: #fff;
    font-size: 11px;
}

.media {
    flex: 1;
    margin-top: -2px;
    padding: 7px;
}

.media-search {
    display: flex;
    gap: 3px;
}

.search-box {
    display: flex;
    flex: 1;
    align-items: center;
    gap: 5px;
    height: 20px;
    padding: 0 4px;
    background: #1b1d1f;
    border: 1px solid #5c5e60;
    border-radius: 3px;
}

.search-box svg {
    width: 12px;
    height: 12px;
    fill: none;
    stroke: #d0d2d3;
    stroke-width: 2;
}

.search-box input {
    flex: 1;
    min-width: 0;
    font-size: 11px;
    font-style: italic;
}

input::placeholder {
    color: #8c8e90;
}

.list-btn {
    width: 25px;
    height: 20px;
    background: #424446;
    border: 1px solid #5c5e60;
    border-radius: 3px;
}

.list-btn svg {
    width: 16px;
    height: 12px;
    margin: auto;
    stroke: #d0d2d3;
    stroke-width: 2;
}

.media-path {
    display: flex;
    align-items: center;
    gap: 6px;
    margin-top: 6px;
    padding-bottom: 4px;
    border-bottom: 1px solid #77797b;
}

.back {
    width: 20px;
    height: 20px;
    border: 1px solid #36393b;
}

.back svg {
    width: 12px;
    height: 12px;
    margin: auto;
    fill: none;
    stroke: #5c5e60;
    stroke-width: 2;
}

.home svg {
    width: 14px;
    height: 14px;
}

.tiles {
    display: grid;
    grid-template-columns: 108px 108px;
    justify-content: center;
    row-gap: 24px;
    padding: 37px 4px 0 0;
}

.tiles a {
    display: flex;
    flex-direction: column;
    align-items: center;
    gap: 12px;
    height: 100px;
    color: #f0f0f0;
    font-size: 11px;
    white-space: nowrap;
}

.tiles svg {
    width: 70px;
    height: 70px;
    background: #a7a9aa;
    border-radius: 2px;
    fill: #25282b;
}

.fx {
    font: bold 42px "Liberation Sans", sans-serif;
}

.loop,
.lens {
    fill: none;
    stroke: #25282b;
    stroke-width: 7;
}

.lens {
    stroke-width: 4;
}

.tiles .bg {
    fill: #a7a9aa;
}

.person {
    stroke: #a7a9aa;
    stroke-width: 1;
}

.star {
    stroke: #25282b;
    stroke-width: 2;
    stroke-linejoin: round;
}

/* transport */
.transport {
    display: flex;
    justify-content: space-between;
    align-items: flex-end;
    height: 13px;
    padding: 0 10px 0 4px;
    overflow: hidden;
}

.tp,
.pair {
    display: flex;
    align-items: flex-end;
    gap: 11px;
}

.pair {
    gap: 5px;
}

.transport i {
    display: flex;
    height: 6px;
    background: #18191b;
    border: 1px solid #5c5e60;
    border-bottom: 0;
    border-radius: 2px 2px 0 0;
}

.transport b {
    border-right: 1px solid #5c5e60;
}

.transport .grey,
.transport .fill {
    background: #424446;
}

.transport .light {
    background: #d4d5d6;
}

.transport .display {
    width: 276px;
    height: 9px;
    padding-left: 124px;
    background: #626566;
    border: 2px solid #b5b8b9;
    border-bottom: 0;
}

.display b {
    width: 50px;
    background: #a0a5a5;
}

.w25 {
    width: 25px;
}

.w38 {
    width: 38px;
}

.w44 {
    width: 44px;
}

.w50 {
    width: 50px;
}

.w80 {
    width: 80px;
}

.w89 {
    width: 89px;
}

.w112 {
    width: 112px;
}

.w149 {
    width: 149px;
}

.w213 {
    width: 213px;
}

.w232 {
    width: 232px;
}

/* taskbar */
.taskbar {
    height: 27px;
    overflow: hidden;
    background: #dfe0e2;
    color: #222;
}

.taskbar-row {
    display: grid;
    grid-template-columns: 1fr auto 1fr;
    align-items: center;
    height: 48px;
    border-top: 1px solid #b9babb;
}

.weather {
    display: flex;
    align-items: flex-start;
    justify-self: start;
    gap: 2px;
    height: 40px;
    padding-left: 20px;
}

.weather svg {
    width: 28px;
    height: 34px;
}

.weather text {
    fill: #fff;
    font-size: 11px;
}

.weather span {
    padding-top: 4px;
}

.apps {
    display: flex;
    align-items: center;
    gap: 20px;
}

.apps button svg {
    width: 24px;
    height: 24px;
}

.apps .badged {
    overflow: visible;
}

.task-search {
    display: flex;
    align-items: center;
    gap: 12px;
    width: 218px;
    height: 32px;
    margin: 0 -7px;
    padding: 0 2px 0 10px;
    overflow: hidden;
    background: #f5f6f6;
    border-radius: 16px;
}

.task-search svg {
    width: 14px;
    height: 18px;
    fill: none;
    stroke: #333;
    stroke-width: 2;
}

.task-search input {
    flex: 1;
    min-width: 0;
    font-size: 13px;
}

.task-search input::placeholder {
    color: #555;
}

.task-search .art {
    width: 50px;
    height: 32px;
    stroke: none;
}

.tray {
    display: flex;
    align-items: center;
    justify-self: end;
    height: 32px;
    padding-right: 20px;
}

.tray svg {
    height: 18px;
}

.tray-up svg,
.pin,
.wifi,
.sound {
    fill: none;
    stroke: #222;
}

.tray-up svg {
    width: 12px;
    height: 12px;
    stroke-width: 2;
}

.pin {
    width: 10px;
    margin-left: 21px;
    stroke: #999;
}

.net {
    width: 16px;
    margin-left: 24px;
}

.wifi {
    width: 18px;
    margin-left: 22px;
}

.sound {
    width: 18px;
    margin-left: 6px;
}

.tray time {
    align-self: flex-start;
    margin: 0 9px 0 48px;
}

.bell {
    width: 14px;
}

.bell .z,
.bell .zz {
    fill: none;
    stroke: #fff;
}

.bell .zz {
    stroke: #222;
}
```
